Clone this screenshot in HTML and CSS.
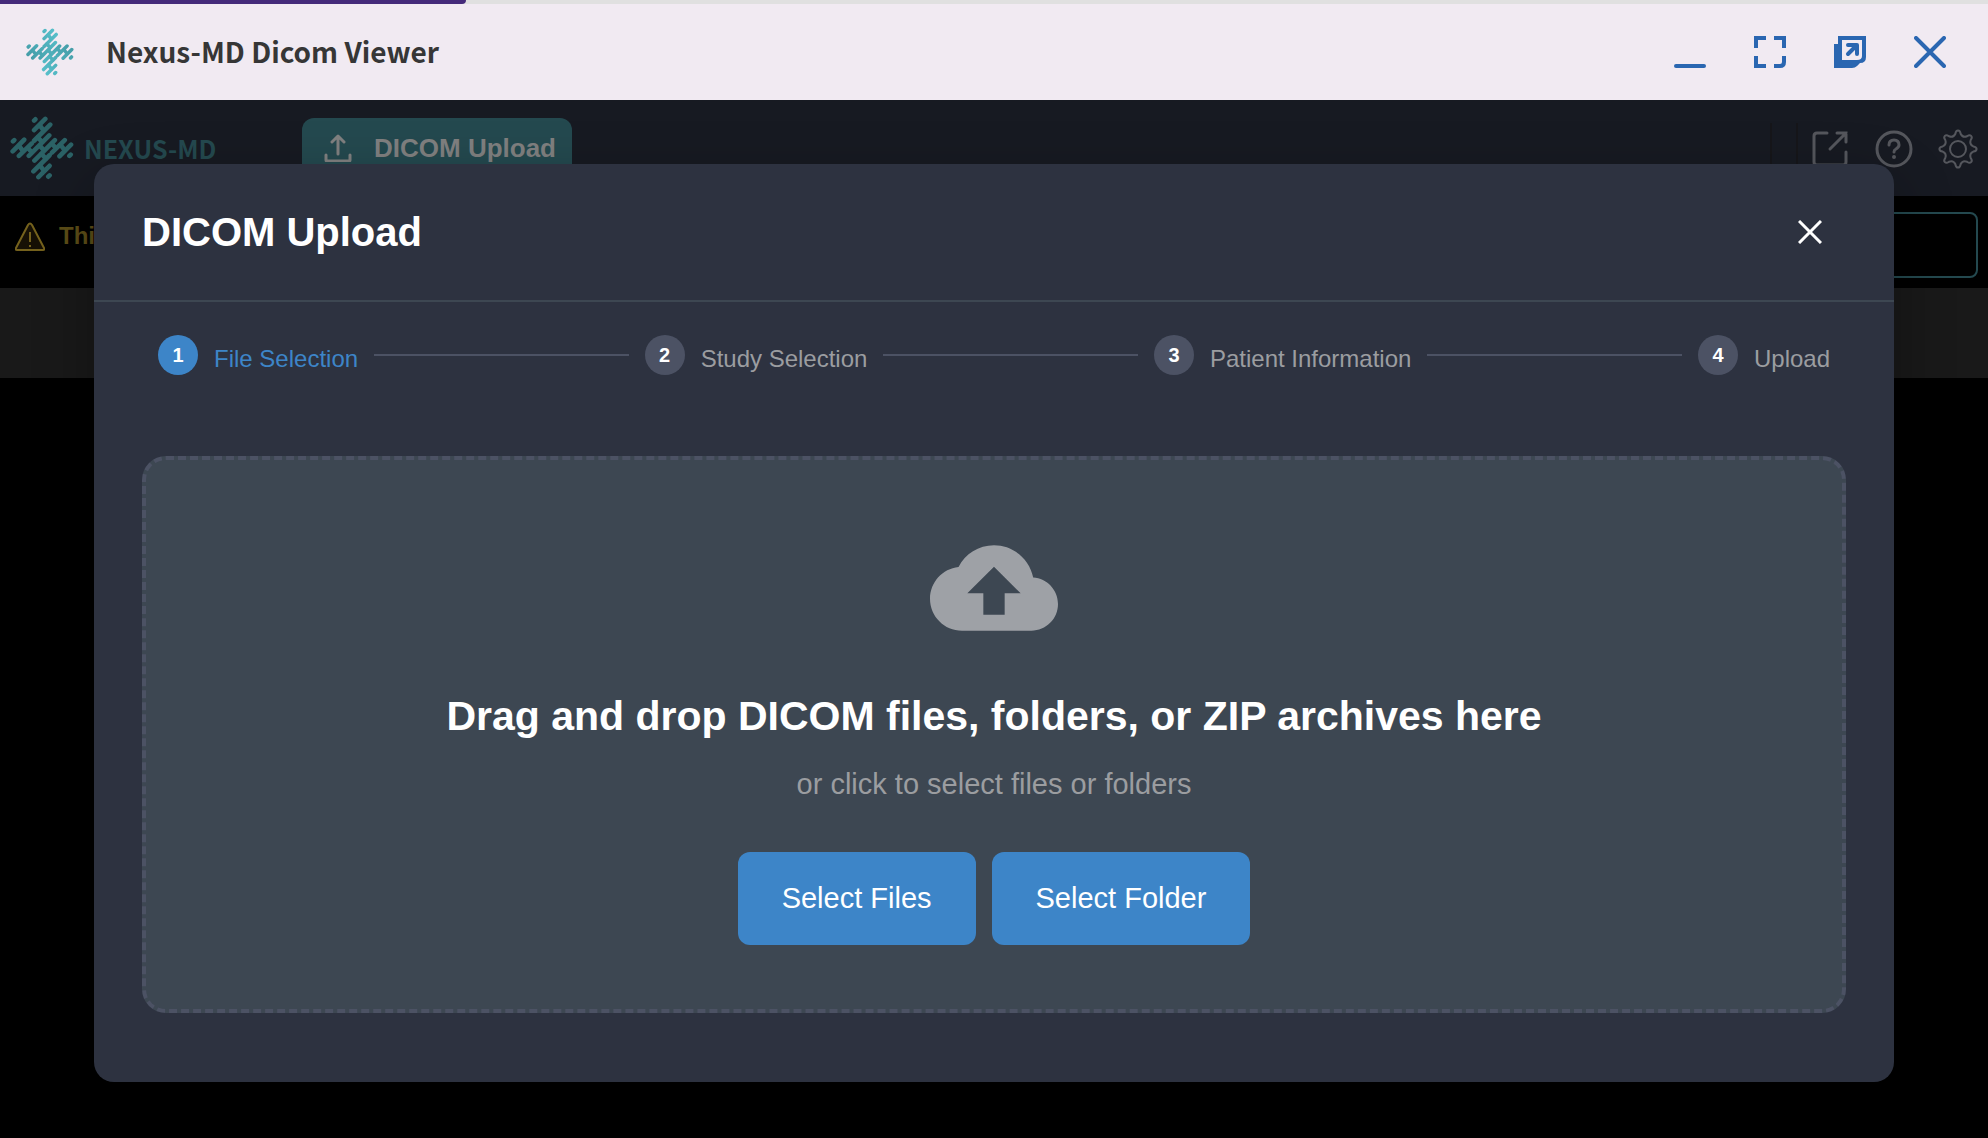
FILE: index.html
```html
<!DOCTYPE html>
<html lang="en">
<head>
  <meta charset="UTF-8">
  <meta name="viewport" content="width=device-width, initial-scale=1.0">
  <title>Nexus-MD Dicom Viewer</title>
  <link rel="stylesheet" href="styles.css">
</head>
<body>
  <svg class="defs" aria-hidden="true">
    <linearGradient id="teal" gradientUnits="userSpaceOnUse" x1="0" y1="199" x2="194" y2="5">
      <stop offset="0" stop-color="#3d8f9a"/>
      <stop offset="1" stop-color="#5fcdd8"/>
    </linearGradient>
    <symbol id="mark" viewBox="0 5 194 194">
      <g id="mark-half">
        <path d="M77 15l-4 4M13 78l-4 4M107 14L73 48M122 31L73 80M43 77L8 112M66 88L27 126M119 64L57 126"/>
        <path d="M90 33l12 16M27 95l12 16M84 70l14 14M54 102l12 13"/>
      </g>
      <use href="#mark-half" transform="rotate(180 96.5 102)"/>
      <path d="M90 95l13 14"/>
    </symbol>
  </svg>

  <header class="window-bar">
    <div class="progress"><div class="progress-fill"></div></div>
    <div class="window-row">
      <svg class="window-logo" aria-hidden="true"><use href="#mark"/></svg>
      <h1>Nexus-MD Dicom Viewer</h1>
      <div class="window-actions">
        <button aria-label="Minimize">
          <svg viewBox="0 0 32 32"><path d="M2 30h28" stroke="currentColor" stroke-width="4" stroke-linecap="round"/></svg>
        </button>
        <button aria-label="Full screen">
          <svg viewBox="0 0 32 32" fill="none" stroke="currentColor" stroke-width="4"><path d="M2 12V2h10M20 2h10v10M2 20v10h10M20 30h6q4 0 4-4v-6"/></svg>
        </button>
        <button aria-label="Open in new window">
          <svg viewBox="0 0 32 32">
            <path fill="currentColor" fill-rule="evenodd" d="M4 0h28v21q0 6-6 6l-3 3q-2 2-5 2H0V8h4zM8 4v20h15q5 0 5-4V4z"/>
            <path fill="none" stroke="currentColor" stroke-width="4" stroke-linecap="round" stroke-linejoin="round" d="M14 18l8-8M14 9h9v9"/>
          </svg>
        </button>
        <button aria-label="Close window">
          <svg viewBox="0 0 32 32"><path d="M2 2l28 28M30 2L2 30" stroke="currentColor" stroke-width="4" stroke-linecap="round"/></svg>
        </button>
      </div>
    </div>
  </header>

  <main class="viewer">
    <nav class="nav">
      <a class="brand" href="#">
        <svg class="brand-mark" aria-hidden="true"><use href="#mark"/></svg>
        <span>NEXUS-MD</span>
      </a>
      <button class="nav-upload">
        <svg viewBox="0 0 28 28" fill="none" stroke="currentColor" stroke-width="3" stroke-linecap="round" stroke-linejoin="round"><path d="M14 20V3M8 8l6-6 6 6M2 21v5q0 1 1 1h22q1 0 1-1v-5"/></svg>
        DICOM Upload
      </button>
      <span class="divider"></span>
      <div class="nav-icons">
        <a href="#" aria-label="Open">
          <svg viewBox="0 0 40 40" fill="none" stroke="currentColor" stroke-width="3" stroke-linecap="round"><path d="M17 4H7q-3 0-3 3v26q0 3 3 3h26q3 0 3-3V23M27 4h9v9M36 4L20 20"/></svg>
        </a>
        <a href="#" aria-label="Help">
          <svg viewBox="0 0 40 40" fill="none" stroke="currentColor" stroke-width="3" stroke-linecap="round"><circle cx="20" cy="20" r="17"/><path d="M15 16q0-5 5-5t5 5q0 2-3 4-2 1-2 3"/><circle cx="20" cy="28" r="1" fill="currentColor" stroke-width="2"/></svg>
        </a>
        <a href="#" aria-label="Settings">
          <svg viewBox="-20 -20 40 40" fill="none" stroke="currentColor" stroke-width="2"><path d="M-2.6-15.3C-2-19.7 2-19.7 2.6-15.3Q4.6-11.1 9-12.7C12.5-15.3 15.3-12.5 12.7-9Q11.1-4.6 15.3-2.6C19.7-2 19.7 2 15.3 2.6Q11.1 4.6 12.7 9C15.3 12.5 12.5 15.3 9 12.7Q4.6 11.1 2.6 15.3C2 19.7-2 19.7-2.6 15.3Q-4.6 11.1-9 12.7C-12.5 15.3-15.3 12.5-12.7 9Q-11.1 4.6-15.3 2.6C-19.7 2-19.7-2-15.3-2.6Q-11.1-4.6-12.7-9C-15.3-12.5-12.5-15.3-9-12.7Q-4.6-11.1-2.6-15.3z"/><circle r="8"/></svg>
        </a>
      </div>
    </nav>
    <div class="notice">
      <svg class="notice-icon" viewBox="0 0 30 30" fill="#161005" stroke="currentColor" stroke-width="2" stroke-linejoin="round" aria-hidden="true"><path d="M13 3q2-3 4 0l12 23q1 2-1 2H2q-2 0-1-2z"/><path d="M15 10v10M15 23v2"/></svg>
      <span>This</span>
      <input class="notice-input" type="text" aria-label="Search">
    </div>
    <div class="toolbar"></div>

    <div class="overlay">
      <section class="modal" role="dialog" aria-labelledby="modal-title">
        <div class="modal-header">
          <h2 id="modal-title">DICOM Upload</h2>
          <button class="modal-close" aria-label="Close">
            <svg viewBox="0 0 24 24"><path d="M1 1l22 22M23 1L1 23" stroke="currentColor" stroke-width="3"/></svg>
          </button>
        </div>
        <div class="modal-body">
          <ol class="steps">
            <li class="step active"><span class="step-number">1</span><span class="step-label">File Selection</span></li>
            <li class="step-line" role="presentation"></li>
            <li class="step"><span class="step-number">2</span><span class="step-label">Study Selection</span></li>
            <li class="step-line" role="presentation"></li>
            <li class="step"><span class="step-number">3</span><span class="step-label">Patient Information</span></li>
            <li class="step-line" role="presentation"></li>
            <li class="step"><span class="step-number">4</span><span class="step-label">Upload</span></li>
          </ol>
          <div class="dropzone">
            <svg class="cloud" viewBox="0 0 24 24" aria-hidden="true"><path fill="currentColor" d="M19.35 10.04C18.67 6.59 15.64 4 12 4 9.11 4 6.6 5.64 5.35 8.04 2.34 8.36 0 10.91 0 14c0 3.31 2.69 6 6 6h13c2.76 0 5-2.24 5-5 0-2.64-2.05-4.78-4.65-4.96zM14 13v4h-4v-4H7l5-5 5 5h-3z"/></svg>
            <h3>Drag and drop DICOM files, folders, or ZIP archives here</h3>
            <p>or click to select files or folders</p>
            <div class="dropzone-buttons">
              <button>Select Files</button>
              <button>Select Folder</button>
            </div>
          </div>
        </div>
      </section>
    </div>
  </main>
</body>
</html>
```
FILE: styles.css
```css
* { box-sizing: border-box; }
body { margin: 0; min-height: 100vh; display: flex; flex-direction: column; background: #000; font-family: "Liberation Sans", Arial, sans-serif; }
h1, h2, h3, p, ol { margin: 0; padding: 0; }
button { border: none; background: none; padding: 0; font-family: inherit; cursor: pointer; }
svg { display: block; }
.defs { position: absolute; width: 0; height: 0; }
#mark { fill: none; stroke-width: 14; stroke-linecap: round; }

/* window title bar */
.window-bar { background: #f1eaf2; color: #2a66b1; }
.progress { height: 4px; background: #e0e0e0; }
.progress-fill { width: 466px; height: 4px; background: #452a7a; border-bottom-right-radius: 4px; }
.window-row { display: flex; align-items: center; height: 96px; padding: 0 42px 0 26px; }
.window-logo { width: 48px; height: 48px; stroke: url(#teal); }
.window-row h1 { margin-left: 32px; padding-bottom: 2px; color: #363636; font: 700 28px/40px "Noto Sans CJK SC", sans-serif; }
.window-actions { display: flex; gap: 48px; margin-left: auto; }
.window-actions button { color: inherit; }
.window-actions svg { width: 32px; height: 32px; }

/* viewer behind the dialog */
.viewer { position: relative; flex: 1; }
.nav { display: flex; align-items: center; height: 96px; padding: 0 10px; background: #171a22; }
.brand { display: flex; align-items: center; gap: 10px; width: 292px; color: #24494f; text-decoration: none; font: 700 25px/36px "Noto Sans CJK SC", sans-serif; }
.brand-mark { width: 64px; height: 64px; stroke: #2b6266; }
.nav-upload { display: flex; align-items: center; gap: 22px; height: 60px; padding: 0 16px 0 22px; border-radius: 12px; background: #24494f; color: #808080; font-size: 26px; font-weight: 700; }
.nav-upload svg { width: 28px; height: 28px; }
.divider { width: 28px; height: 50px; margin-left: auto; margin-right: 12px; border: solid #16161a; border-width: 0 2px; }
.nav-icons { display: flex; gap: 24px; padding-top: 2px; }
.nav-icons a { color: #55575d; }
.nav-icons svg { width: 40px; height: 40px; }
.notice { display: flex; align-items: flex-start; height: 92px; padding: 16px 10px; gap: 14px; color: #5c4d17; font-size: 24px; font-weight: 700; line-height: 48px; }
.notice-icon { width: 30px; height: 30px; margin: 10px 0 0 5px; color: #75621d; }
.notice-input { width: 400px; height: 66px; margin-left: auto; border: 2px solid #24494f; border-radius: 8px; background: #000; }
.toolbar { height: 90px; background: #191919; }

/* upload dialog */
.overlay { position: absolute; inset: 0; padding: 64px 94px; }
.modal { border-radius: 20px; background: #2d3240; box-shadow: 0 20px 60px rgba(0, 0, 0, 0.3); color: #fff; }
.modal-header { display: flex; justify-content: space-between; align-items: center; height: 138px; padding: 0 72px 0 48px; border-bottom: 2px solid #3d4752; }
.modal-header h2 { font-size: 40px; line-height: 48px; }
.modal-close { color: #fff; }
.modal-close svg { width: 24px; height: 24px; }
.modal-body { padding: 33px 48px 69px; }
.steps { display: flex; align-items: center; gap: 16px; margin-bottom: 81px; padding: 0 16px; list-style: none; }
.step { display: flex; align-items: center; gap: 16px; color: #9b9da0; }
.step-number { width: 40px; height: 40px; border-radius: 50%; background: #4c5264; color: #fff; font-size: 20px; font-weight: 700; line-height: 40px; text-align: center; }
.step-label { padding-top: 8px; font-size: 24px; line-height: 32px; }
.step.active { color: #3d85c8; }
.step.active .step-number { background: #3d85c8; }
.step-line { flex: 1; height: 2px; background: #4c5264; }
.dropzone { display: flex; flex-direction: column; align-items: center; padding: 64px; border: 4px dashed #4c5264; border-radius: 24px; background: #3d4752; }
.cloud { width: 128px; height: 128px; color: #9ea1a6; }
.dropzone h3 { margin-top: 40px; font-size: 41px; line-height: 48px; }
.dropzone p { margin-top: 28px; color: #9b9da0; font-size: 29px; line-height: 32px; }
.dropzone-buttons { display: flex; gap: 16px; margin-top: 52px; }
.dropzone-buttons button { height: 93px; padding: 0 44px; border-radius: 12px; background: #3d85c8; color: #fff; font-size: 29px; }
```
